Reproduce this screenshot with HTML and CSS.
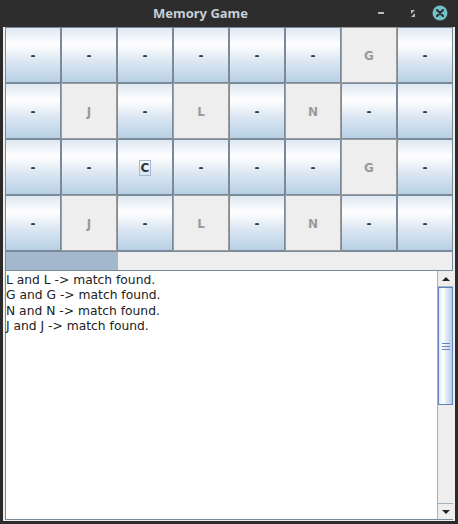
FILE: index.html
```html
<!DOCTYPE html>
<html>
<head>
<meta charset="utf-8">
<title>Memory Game</title>
<link rel="stylesheet" href="styles.css">
</head>
<body>
<div class="window">
  <div class="titlebar">
    <div class="title">Memory Game</div>
    <div class="controls">
      <svg width="80" height="27" viewBox="0 0 80 27">
        <rect x="0" y="12" width="6" height="2" fill="#b9bdc2"/>
        <polygon points="33,10 37,10 33,14" fill="#b9bdc2"/>
        <polygon points="36,16 32,16 36,12" fill="#b9bdc2" transform="translate(1,1)"/>
        <circle cx="62" cy="13" r="7.5" fill="#72bfc6"/>
        <path d="M59 10 L65 16 M65 10 L59 16" stroke="#2b2b2b" stroke-width="2" stroke-linecap="round"/>
      </svg>
    </div>
  </div>
  <div class="content">
    <div class="grid">
      <div class="cell">-</div><div class="cell">-</div><div class="cell">-</div><div class="cell">-</div><div class="cell">-</div><div class="cell">-</div><div class="cell off">G</div><div class="cell">-</div>
      <div class="cell">-</div><div class="cell off">J</div><div class="cell">-</div><div class="cell off">L</div><div class="cell">-</div><div class="cell off">N</div><div class="cell">-</div><div class="cell">-</div>
      <div class="cell">-</div><div class="cell">-</div><div class="cell"><span class="focus">C</span></div><div class="cell">-</div><div class="cell">-</div><div class="cell">-</div><div class="cell off">G</div><div class="cell">-</div>
      <div class="cell">-</div><div class="cell off">J</div><div class="cell">-</div><div class="cell off">L</div><div class="cell">-</div><div class="cell off">N</div><div class="cell">-</div><div class="cell">-</div>
    </div>
    <div class="progress"><div class="fill" style="width:25%"></div></div>
    <div class="scrollpane">
      <div class="textarea">
        <div>L and L -&gt; match found.</div>
        <div>G and G -&gt; match found.</div>
        <div>N and N -&gt; match found.</div>
        <div>J and J -&gt; match found.</div>
      </div>
      <div class="scrollbar">
        <div class="sbtn"><svg width="14" height="14" viewBox="0 0 14 14"><polygon points="3,9 11,9 7,5" fill="#222"/></svg></div>
        <div class="thumb"><div class="grip"><i></i><i></i><i></i></div></div>
        <div class="track"></div>
        <div class="sbtn down"><svg width="14" height="14" viewBox="0 0 14 14"><polygon points="3,5 11,5 7,9" fill="#222"/></svg></div>
      </div>
    </div>
  </div>
</div>
</body>
</html>
```
FILE: styles.css
```css
html, body {
  margin: 0;
  padding: 0;
  background: #2b2b2b;
}
.window {
  width: 458px;
  height: 524px;
  display: flex;
  flex-direction: column;
  overflow: hidden;
}
.titlebar {
  height: 27px;
  flex: none;
  display: grid;
  grid-template-columns: 1fr;
  align-items: center;
  background: #2d2d2d;
}
.title {
  grid-area: 1 / 1;
  padding-right: 57px;
  text-align: center;
  font: bold 13px "Noto Sans", "DejaVu Sans", sans-serif;
  color: #c6cfda;
  line-height: 27px;
}
.controls {
  grid-area: 1 / 1;
  justify-self: end;
  height: 27px;
}
.controls svg { display: block; }
.content {
  flex: 1;
  margin: 0 3px 3px 3px;
  padding: 0 2px 1px 2px;
  background: #eeeeee;
  display: flex;
  flex-direction: column;
}
.grid {
  display: grid;
  grid-template-columns: repeat(8, 56px);
  grid-template-rows: repeat(4, 56px);
}
.cell {
  box-sizing: border-box;
  border: 1px solid #7a8a99;
  background: linear-gradient(#dde8f3 0%, #ffffff 30%, #dde8f3 60%, #b8cfe5 100%);
  display: flex;
  align-items: center;
  justify-content: center;
  padding-top: 2px;
  font: bold 12px "DejaVu Sans", sans-serif;
  color: #333333;
}
.cell.off {
  background: #eeeeee;
  border-color: #9c9c9c;
  color: #9a9a9a;
}
.focus {
  outline: 1px solid #a3b8cc;
  padding: 0 1px;
  line-height: 14px;
}
.progress {
  height: 20px;
  box-sizing: border-box;
  border: 1px solid #7a8a99;
  background: #eeeeee;
  flex: none;
}
.fill {
  height: 100%;
  background: #a3b8cc;
}
.scrollpane {
  flex: 1;
  display: flex;
  border-left: 1px solid #7a8a99;
  border-bottom: 1px solid #7a8a99;
  background: #ffffff;
  min-height: 0;
}
.textarea {
  flex: 1;
  padding-top: 2px;
  font: 12.3px "DejaVu Sans", sans-serif;
  line-height: 15.3px;
  color: #222222;
}
.scrollbar {
  width: 16px;
  flex: none;
  display: flex;
  flex-direction: column;
  background: #eeeeee;
  border-left: 1px solid #a3b3c3;
  box-sizing: border-box;
}
.sbtn {
  height: 16px;
  box-sizing: border-box;
  border-bottom: 1px solid #a3b3c3;
  display: flex;
  align-items: center;
  justify-content: center;
  background: #eeeeee;
}
.sbtn.down {
  border-bottom: none;
  border-top: 1px solid #a3b3c3;
}
.thumb {
  height: 118px;
  box-sizing: border-box;
  border: 1px solid #6382bf;
  background: linear-gradient(to right, #dde8f3 0%, #ffffff 30%, #dde8f3 60%, #b8cfe5 100%);
  display: flex;
  align-items: center;
  justify-content: center;
}
.grip {
  display: flex;
  flex-direction: column;
  gap: 2px;
}
.grip i {
  display: block;
  width: 8px;
  height: 1px;
  background: #6382bf;
}
.track { flex: 1; }
```
